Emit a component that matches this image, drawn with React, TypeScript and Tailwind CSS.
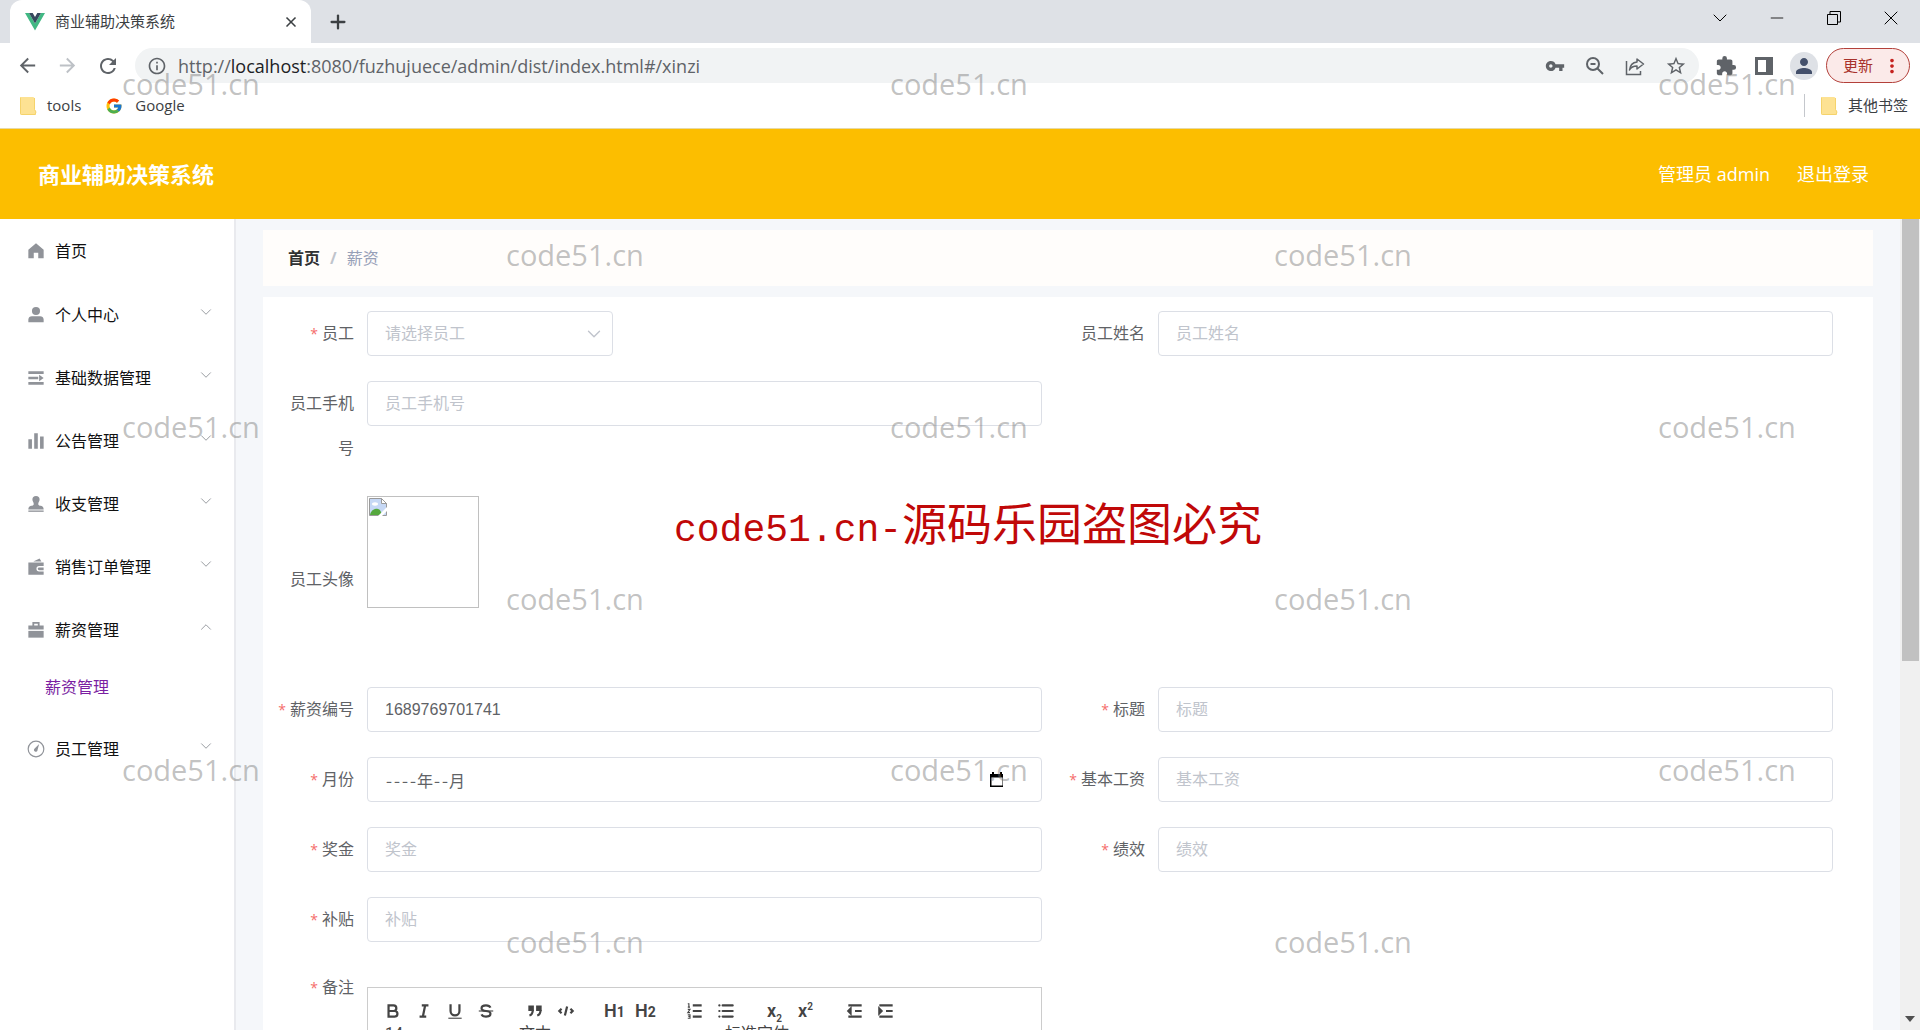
import { useState } from "react";
import type { ReactNode } from "react";
import {
  MdArrowBack,
  MdArrowForward,
  MdExtension,
  MdInfoOutline,
  MdMoreVert,
  MdPerson,
  MdRefresh,
  MdStarBorder,
  MdVpnKey,
} from "react-icons/md";
import { FcGoogle } from "react-icons/fc";
import { ChevronDown, ChevronUp, Minus, Plus, X } from "lucide-react";

/* ---------- Sidebar icons ---------- */
const menuIcons: Record<string, ReactNode> = {
  home: <path d="M10 1.5 1.5 8.5V18h6v-6h5v6h6V8.500z" />,
  user: (
    <>
      <circle cx="10" cy="5.500" r="4.500" />
      <path d="M1.500 18v-3a4 4 0 0 1 4-3.500h9a4 4 0 0 1 4 3.500v3z" />
    </>
  ),
  unfold: (
    <>
      <path d="M1.500 2.500h17v3h-17zM1.500 8.500h11v3h-11zM1.500 14.500h17v3h-17z" />
      <path d="M13.500 6.500 18.500 10l-5 3.500z" />
    </>
  ),
  data: <path d="M1.500 8h4v10.500h-4zM8 1.500h4v17H8zM14.500 5h4v13.500h-4z" />,
  stamp: (
    <>
      <path d="M10 1a4 4 0 0 0-4 4c0 2 1.500 3 1.500 5 0 1-1 2-3 2-2 .5-3 1.500-3 4h17c0-2.500-1-3.500-3-4-2 0-3-1-3-2 0-2 1.500-3 1.500-5a4 4 0 0 0-4-4z" />
      <path d="M1.500 17.200h17v1.500h-17z" />
    </>
  ),
  wallet: (
    <>
      <path d="M1.500 5h17v4h-5a2.500 2.500 0 0 0 0 6h5v3.500h-17z" />
      <path d="M7 4l7-3.500L16 4z" />
      <path d="M13.500 10.500h5v3h-5a1.500 1.500 0 0 1 0-3z" />
    </>
  ),
  suitcase: (
    <>
      <path d="M6 5V1h8v4h4.500v4.500h-17V5zM8 5h4V3H8z" fillRule="evenodd" />
      <path d="M1.500 11h17v7.500h-17z" />
    </>
  ),
  compass: (
    <>
      <circle cx="10" cy="10" r="8.700" fill="none" stroke="currentColor" strokeWidth="1.300" />
      <path d="M13.500 4.500 11.700 11a2 2 0 1 1-3.200-1.500z" />
    </>
  ),
};

const menu = [
  { icon: "user", label: "个人中心" },
  { icon: "unfold", label: "基础数据管理" },
  { icon: "data", label: "公告管理" },
  { icon: "stamp", label: "收支管理" },
  { icon: "wallet", label: "销售订单管理" },
  { icon: "suitcase", label: "薪资管理", children: ["薪资管理"] },
  { icon: "compass", label: "员工管理" },
];

function MenuIcon({ name }: { name: string }) {
  return (
    <svg viewBox="0 0 20 20" className="w-[18px] h-[18px] shrink-0 text-[#909399]" fill="currentColor">
      {menuIcons[name]}
    </svg>
  );
}

function Folder() {
  return (
    <svg viewBox="0 0 18 20" className="w-[18px] h-5 shrink-0">
      <path d="M2 1h12a1.500 1.500 0 0 1 1.500 1.500V13l1.500 2.500V19H3a2 2 0 0 1-2-2V2a1 1 0 0 1 1-1z" fill="#fde293" />
      <path d="M1.500 1.500v16a1 1 0 0 0 1 1h13.500l1-2.500-1.500-2.500V2" fill="none" stroke="#f5d36b" />
    </svg>
  );
}

function TabStrip() {
  return (
    <div className="flex h-[43px] bg-[#dee1e6] pl-2.5">
      <div className="flex w-[301px] items-center rounded-t-xl bg-white pl-[15px] pr-2">
        <svg viewBox="0 0 20 18" className="w-5 h-[18px] shrink-0">
          <path d="M0 0h4l6 10.500L16 0h4L10 17.500z" fill="#41b883" />
          <path d="M4 0h3.700L10 4l2.300-4H16l-6 10.500z" fill="#35495e" />
        </svg>
        <span className="ml-2.5 flex-1 text-[15px] text-[#3c4043]">商业辅助决策系统</span>
        <button aria-label="关闭标签页" className="p-1">
          <X className="w-4 h-4 text-[#3c4043]" strokeWidth={2.500} />
        </button>
      </div>
      <button aria-label="新标签页" className="ml-4">
        <Plus className="w-[22px] h-[22px] text-[#3c4043]" strokeWidth={2.500} />
      </button>
      <div className="ml-auto flex h-9 pr-px text-black">
        <button aria-label="搜索标签页" className="flex w-[57px] items-center justify-center">
          <ChevronDown className="w-6 h-6" strokeWidth={1} />
        </button>
        <button aria-label="最小化" className="flex w-[57px] items-center justify-center">
          <Minus className="w-5 h-5" strokeWidth={1} />
        </button>
        <button aria-label="还原" className="flex w-[57px] items-center justify-center">
          <svg viewBox="0 0 14 14" className="w-3.5 h-3.5" fill="none" stroke="currentColor">
            <path d="M.5 3.500h10v10H.5zM3 3V.5h10.500V11H11" />
          </svg>
        </button>
        <button aria-label="关闭" className="flex w-[57px] items-center justify-center">
          <X className="w-6 h-6" strokeWidth={1} />
        </button>
      </div>
    </div>
  );
}

function Toolbar() {
  return (
    <div className="flex items-center bg-white pt-[5px] pl-4 pr-2.5 text-[#5f6368]">
      <div className="flex w-[119px] gap-[17px]">
        <button aria-label="后退"><MdArrowBack className="w-[23px] h-[23px]" /></button>
        <button aria-label="前进"><MdArrowForward className="w-[23px] h-[23px] text-[#bdc1c6]" /></button>
        <button aria-label="刷新"><MdRefresh className="w-6 h-6" /></button>
      </div>
      <div className="flex h-[35px] flex-1 items-center rounded-full bg-[#f1f3f4] px-3">
        <MdInfoOutline className="w-5 h-5 shrink-0" />
        <a href="#/xinzi" className="ml-[11px] flex-1 text-lg leading-none">
          http://<span className="text-[#202124]">localhost</span>:8080/fuzhujuece/admin/dist/index.html#/xinzi
        </a>
        <div className="flex items-center gap-5">
          <button aria-label="密码"><MdVpnKey className="w-5 h-5" /></button>
          <button aria-label="缩放">
            <svg viewBox="0 0 20 20" className="w-5 h-5" fill="none" stroke="currentColor" strokeWidth="2">
              <circle cx="8" cy="8" r="6" />
              <path d="M12.500 12.500 18 18M5.500 8h5" />
            </svg>
          </button>
          <button aria-label="分享">
            <svg viewBox="0 0 20 20" className="w-5 h-5" fill="none" stroke="currentColor" strokeWidth="1.500">
              <path d="M1.500 5v13.500h14V15" />
              <path d="M12 3l6.500 5-6.500 5v-3c-3.500 0-6 1-7.500 4 .5-4.500 3-7.500 7.500-8z" strokeLinejoin="round" />
            </svg>
          </button>
          <button aria-label="收藏"><MdStarBorder className="w-[22px] h-[22px]" /></button>
        </div>
      </div>
      <div className="ml-4 flex items-center gap-[18px]">
        <button aria-label="扩展程序"><MdExtension className="w-[22px] h-[22px]" /></button>
        <button aria-label="侧边栏">
          <svg viewBox="0 0 18 18" className="w-[18px] h-[18px]">
            <path d="M0 0h18v18H0zM3 3v12h8V3z" fill="currentColor" fillRule="evenodd" />
          </svg>
        </button>
      </div>
      <button aria-label="用户" className="ml-[17px] flex h-7 w-7 items-center justify-center rounded-full bg-[#dee1e6]">
        <MdPerson className="w-6 h-6 text-[#44506b]" />
      </button>
      <button className="ml-2 flex h-[35px] w-[84px] items-center rounded-full border border-[#b3403a] bg-[#fbeae9] pl-4 text-[15px] text-[#a8322b]">
        更新
        <MdMoreVert className="ml-2 w-[22px] h-[22px] text-[#c5221f]" />
      </button>
    </div>
  );
}

function Bookmarks() {
  return (
    <div className="flex h-[46px] items-center border-b border-[#e6d9a8] bg-white pl-[19px] pr-3 text-[15px] text-[#3c4043]">
      <a href="#tools" className="flex items-center gap-2.5"><Folder />tools</a>
      <a href="#google" className="ml-6 flex items-center gap-3">
        <FcGoogle className="w-[18px] h-[18px]" />Google
      </a>
      <a href="#other" className="ml-auto flex items-center gap-2.5 border-l border-[#c4c7cc] pl-[15px]">
        <Folder />其他书签
      </a>
    </div>
  );
}

function Sidebar() {
  const [open, setOpen] = useState("薪资管理");
  return (
    <nav className="w-[236px] shrink-0 border-r-2 border-[#e9eaee] bg-white text-base text-[#111]">
      <a href="#/" className="flex h-16 items-center gap-2.5 pl-[27px]">
        <MenuIcon name="home" />
        首页
      </a>
      {menu.map((item) => (
        <div key={item.label}>
          <button
            className="flex h-[63px] w-full items-center gap-2.5 pl-[27px] pr-[19px]"
            onClick={() => setOpen(open === item.label ? "" : item.label)}
          >
            <MenuIcon name={item.icon} />
            <span className="flex-1 text-left">{item.label}</span>
            {open === item.label ? (
              <ChevronUp className="mb-1.5 w-[18px] h-[18px] text-[#909399]" strokeWidth={1.200} />
            ) : (
              <ChevronDown className="mb-1.5 w-[18px] h-[18px] text-[#909399]" strokeWidth={1.200} />
            )}
          </button>
          {open === item.label &&
            item.children?.map((child) => (
              <a key={child} href="#/xinzi" className="flex h-14 items-center pb-1 pl-[45px] text-[#7b1fa2]">
                {child}
              </a>
            ))}
        </div>
      ))}
    </nav>
  );
}

/* ---------- Form ---------- */
const boxClass =
  "h-[45px] w-full rounded border border-[#dcdfe6] bg-white px-[17px] text-base text-[#606266] placeholder:text-[#c0c4cc] outline-none";
const boxFont = "font-['Liberation_Sans','Noto_Sans_CJK_SC',sans-serif]";
const monthFont = "font-['Noto_Sans_Mono_CJK_SC','Liberation_Mono','Noto_Sans_CJK_SC',monospace]";

type FieldProps = { id: string; label: string; required?: boolean; children: ReactNode };

function Field({ id, label, required, children }: FieldProps) {
  return (
    <div className="flex pr-[26px]">
      <label htmlFor={id} className="w-[90px] shrink-0 self-center pr-[13px] text-right text-base leading-[45px] text-[#606266]">
        {required && <span className="mr-1 text-sm text-[#f56c6c]">*</span>}
        {label}
      </label>
      <div className="min-w-0 flex-1">{children}</div>
    </div>
  );
}

function TextField({ id, label, required, value }: { id: string; label: string; required?: boolean; value?: string }) {
  return (
    <Field id={id} label={label} required={required}>
      <input id={id} className={`${boxClass} ${boxFont}`} placeholder={label} defaultValue={value} />
    </Field>
  );
}

function BrokenImage() {
  return (
    <div className="h-28 w-28 border border-[#c0c0c0] p-px" role="img" aria-label="员工头像">
      <svg viewBox="0 0 18 18" className="w-[18px] h-[18px]">
        <path d="M.5.500h12l5 5v12H.5z" fill="#c6d8f5" stroke="#9a9a9a" />
        <path d="M12.500.500v5h5z" fill="#fff" stroke="#9a9a9a" />
        <ellipse cx="6" cy="6" rx="3" ry="1.700" fill="#fff" />
        <path d="M1 17c1-5 5-7 8-6 2 .5 3 2 4 6z" fill="#55a83e" />
        <path d="M9 18 18 9v4l-5 5z" fill="#fff" />
      </svg>
    </div>
  );
}

const editorIcons: Record<string, ReactNode> = {
  bold: <path d="M5 4h4.500a2.500 2.500 0 0 1 0 5H5zM5 9h5.500a2.500 2.500 0 0 1 0 5H5z" />,
  italic: <path d="M7 4h6M5 14h6M8 14l2-10" />,
  underline: (
    <>
      <path d="M5 3v6a4 4 0 0 0 8 0V3" />
      <path d="M3 15.500h12" strokeWidth="1" />
    </>
  ),
  strike: (
    <>
      <path d="M2.500 9h13" strokeWidth="1" />
      <path d="M13 6C12.500 4.800 11 4 9 4 6.800 4 5 5 5 6.500S6.500 8.800 9 9s4 1 4 2.500S11.200 14 9 14c-2 0-3.500-.8-4-2" />
    </>
  ),
  quote: (
    <>
      <path d="M4 5h3v3H4zM11 5h3v3h-3z" fill="currentColor" />
      <path d="M7 8c0 4-3 5-3 5M14 8c0 4-3 5-3 5" />
    </>
  ),
  code: <path d="M5 7 3 9l2 2M13 7l2 2-2 2M10 5 8 13" />,
  ordered: (
    <>
      <path d="M7 4h8M7 9h8M7 14h8" />
      <path d="M2.500 2.500h1v3M2.500 5.500h2M2.500 7.500h2L2.500 10.500h2M2.500 12.500h2v3h-2M3 14h1.500" strokeWidth="1" />
    </>
  ),
  bullet: <path d="M6 4h9M6 9h9M6 14h9M3 4h.1M3 9h.1M3 14h.1" strokeLinecap="round" />,
  outdent: (
    <>
      <path d="M3 14h12M3 4h12M9 9h6" />
      <path d="M5 7v4L3 9z" fill="currentColor" />
    </>
  ),
  indent: (
    <>
      <path d="M3 14h12M3 4h12M9 9h6" />
      <path d="M3 7v4l2-2z" fill="currentColor" />
    </>
  ),
};

function EditorIcon({ name }: { name: string }) {
  return (
    <button type="button" aria-label={name} className="flex h-[27px] w-[31px] items-center justify-center">
      <svg viewBox="0 0 18 18" className="w-5 h-5" fill="none" stroke="currentColor" strokeWidth="2">
        {editorIcons[name]}
      </svg>
    </button>
  );
}

function EditorText({ main, sub, sup, small }: { main: string; sub?: string; sup?: string; small?: string }) {
  return (
    <button type="button" className="h-[27px] w-[31px] text-lg leading-[27px] font-semibold">
      {main}
      {small && <span className="text-sm font-bold">{small}</span>}
      {sub && <span className="align-sub text-[10px] leading-none">{sub}</span>}
      {sup && <span className="align-super text-[10px] leading-none">{sup}</span>}
    </button>
  );
}

function Editor() {
  return (
    <div className="h-60 border border-[#ccc] px-[9px] pt-[9px] font-['Roboto','Noto_Sans_CJK_SC',sans-serif] text-[#444]">
      <div className="flex gap-[18px]">
        <div className="flex">
          <EditorIcon name="bold" />
          <EditorIcon name="italic" />
          <EditorIcon name="underline" />
          <EditorIcon name="strike" />
        </div>
        <div className="flex">
          <EditorIcon name="quote" />
          <EditorIcon name="code" />
        </div>
        <div className="flex">
          <EditorText main="H" small="1" />
          <EditorText main="H" small="2" />
        </div>
        <div className="flex">
          <EditorIcon name="ordered" />
          <EditorIcon name="bullet" />
        </div>
        <div className="flex">
          <EditorText main="x" sub="2" />
          <EditorText main="x" sup="2" />
        </div>
        <div className="flex">
          <EditorIcon name="outdent" />
          <EditorIcon name="indent" />
        </div>
      </div>
      <div className="flex text-base leading-5">
        <span className="w-[134px] pl-2">14px</span>
        <span className="w-[206px] pl-2">文本</span>
        <span className="pl-2">标准字体</span>
      </div>
    </div>
  );
}

function SalaryForm() {
  return (
    <form className="grid flex-1 grid-cols-2 content-start gap-y-[25px] bg-white px-3.5 pt-3.5">
      <Field id="staff" label="员工" required>
        <div className="relative w-[246px]">
          <select
            id="staff"
            className="h-[45px] w-full appearance-none rounded border border-[#dcdfe6] bg-white px-[17px] pb-0.5 text-base text-[#c0c4cc] outline-none"
          >
            <option>请选择员工</option>
          </select>
          <ChevronDown className="pointer-events-none absolute right-2 top-3 w-[22px] h-[22px] text-[#c0c4cc]" strokeWidth={1.500} />
        </div>
      </Field>
      <TextField id="name" label="员工姓名" />
      <TextField id="phone" label="员工手机号" />
      <div />
      <Field id="avatar" label="员工头像">
        <div id="avatar" className="h-[166px]">
          <BrokenImage />
        </div>
      </Field>
      <div />
      <TextField id="number" label="薪资编号" required value="1689769701741" />
      <TextField id="title" label="标题" required />
      <Field id="month" label="月份" required>
        <div className="relative">
          <input id="month" className={`${boxClass} ${monthFont}`} defaultValue="----年--月" />
          <button type="button" aria-label="选择月份" className="absolute right-[38px] top-[15px]">
            <svg viewBox="0 0 14 15" className="w-3.5 h-[15px] text-black">
              <path d="M1 2h1V0h2v2h6V0h2v2h1v13H0V2zM1.500 5.500v8h11v-8z" fill="currentColor" fillRule="evenodd" />
            </svg>
          </button>
        </div>
      </Field>
      <TextField id="base" label="基本工资" required />
      <TextField id="bonus" label="奖金" required />
      <TextField id="merit" label="绩效" required />
      <TextField id="subsidy" label="补贴" required />
      <div />
      <div className="flex pr-[26px]">
        <span className="w-[90px] shrink-0 pr-[13px] text-right text-base leading-10 text-[#606266]">
          <span className="mr-1 text-sm text-[#f56c6c]">*</span>备注
        </span>
        <div className="flex-1 pt-5">
          <Editor />
        </div>
      </div>
    </form>
  );
}

/* ---------- Watermark laid over the whole window ---------- */
const marks = [
  "left-[122px] top-16",
  "left-[890px] top-16",
  "left-[1658px] top-16",
  "left-[506px] top-[235px]",
  "left-[1274px] top-[235px]",
  "left-[122px] top-[407px]",
  "left-[890px] top-[407px]",
  "left-[1658px] top-[407px]",
  "left-[506px] top-[579px]",
  "left-[1274px] top-[579px]",
  "left-[122px] top-[750px]",
  "left-[890px] top-[750px]",
  "left-[1658px] top-[750px]",
  "left-[506px] top-[922px]",
  "left-[1274px] top-[922px]",
];

function Watermark() {
  return (
    <div className="pointer-events-none absolute inset-0 overflow-hidden">
      {marks.map((pos) => (
        <span key={pos} className={`absolute text-[29px] leading-10 text-[#777]/45 ${pos}`}>
          code51.cn
        </span>
      ))}
      <p className="absolute left-[674px] top-[500px] whitespace-nowrap font-['Liberation_Mono','Noto_Sans_CJK_SC',monospace] text-[38px] leading-[60px] text-[#c00808]">
        code51.cn-<span className="text-[45px]">源码乐园盗图必究</span>
      </p>
    </div>
  );
}

export default function App() {
  return (
    <div className="relative flex h-screen flex-col overflow-hidden bg-white font-['Open_Sans','Noto_Sans_CJK_SC',sans-serif]">
      <TabStrip />
      <Toolbar />
      <Bookmarks />
      <header className="flex h-[90px] shrink-0 items-center bg-[#fcbe00] pl-[38px] pr-[51px] text-white">
        <h1 className="flex-1 text-[22px] font-bold">商业辅助决策系统</h1>
        <span className="text-lg">管理员 admin</span>
        <a href="#/login" className="ml-[27px] text-lg">退出登录</a>
      </header>
      <div className="flex min-h-0 flex-1">
        <Sidebar />
        <main className="flex min-w-0 flex-1 flex-col overflow-hidden bg-[#f5f7fa] pl-[27px] pr-[27px] pt-[11px]">
          <div className="mb-[11px] flex h-14 shrink-0 items-center bg-[#fffdfb] pl-[25px] text-base">
            <a href="#/" className="font-semibold text-[#303133]">首页</a>
            <span className="mx-2.5 font-bold text-[#c0c4cc]">/</span>
            <span className="text-[#97a0b8]">薪资</span>
          </div>
          <SalaryForm />
        </main>
        <div className="flex w-5 shrink-0 flex-col items-center justify-between bg-[#f0f0f0] pb-2">
          <div className="h-[55%] w-[17px] bg-[#c1c1c1]" />
          <svg viewBox="0 0 10 6" className="w-2.5 h-1.5">
            <path d="M0 0h10L5 6z" fill="#505050" />
          </svg>
        </div>
      </div>
      <Watermark />
    </div>
  );
}
